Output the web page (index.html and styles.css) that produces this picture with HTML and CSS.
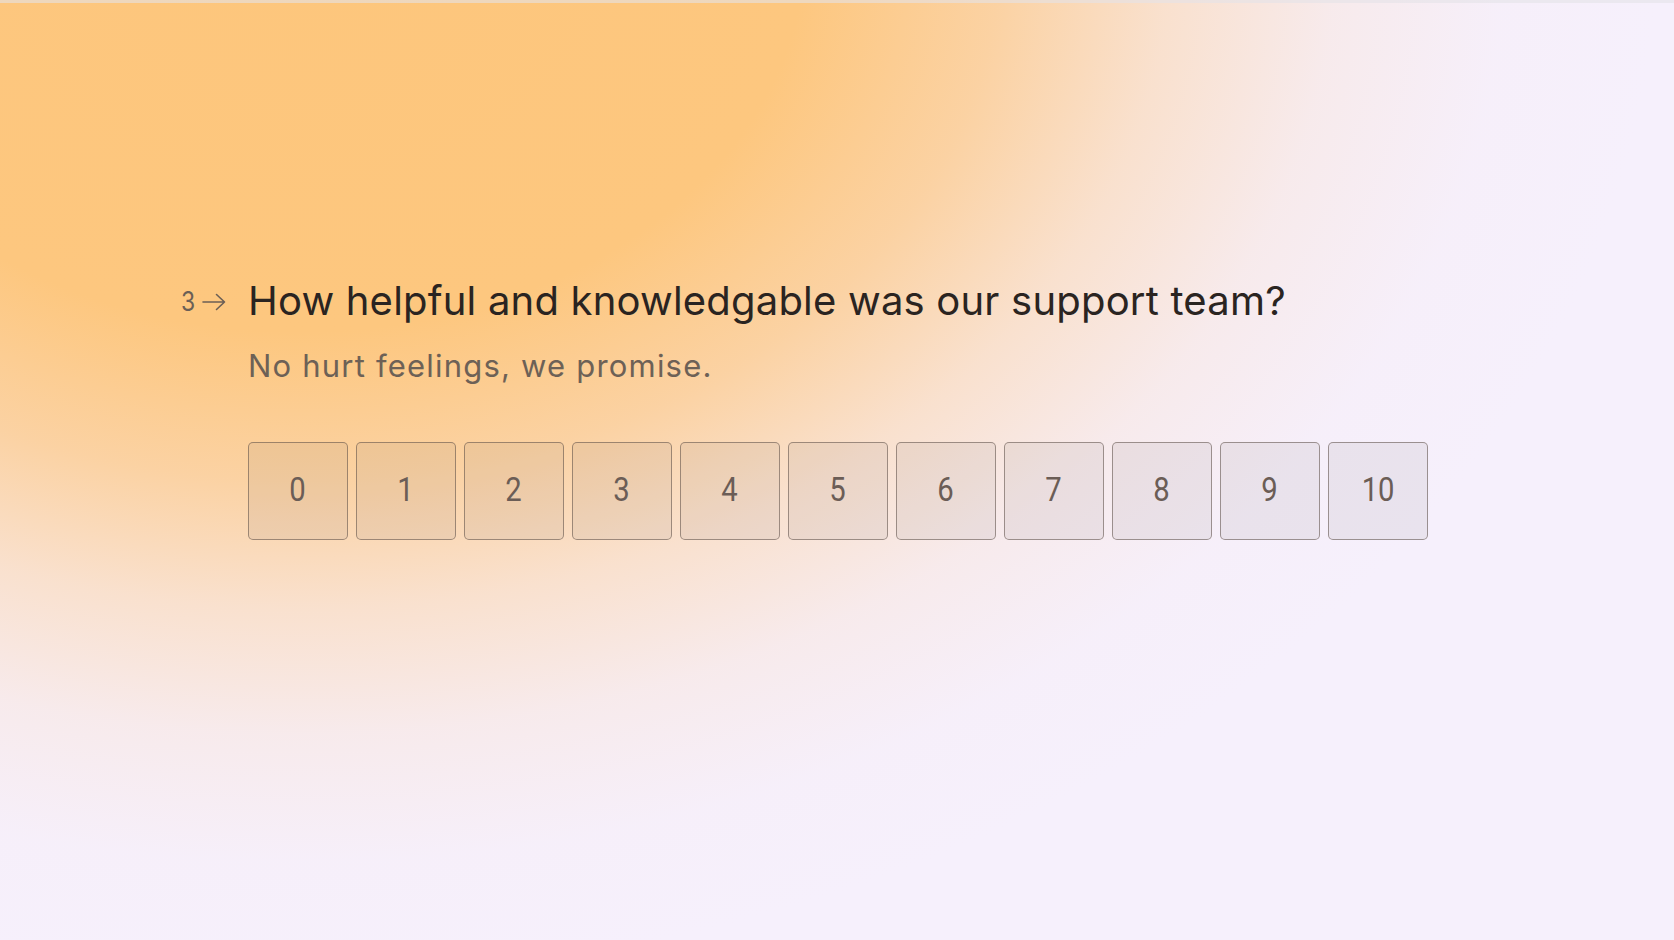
FILE: index.html
```html
<!DOCTYPE html>
<html lang="en">
<head>
<meta charset="utf-8">
<title>Survey question</title>
<link rel="stylesheet" href="styles.css">
</head>
<body>
<div class="page">
  <div class="progress"></div>
  <main class="stage">
    <section class="question">
      <div class="q-head">
        <span class="q-num">
          <span class="q-index">3</span>
          <svg class="q-arrow" width="24" height="18" viewBox="0 0 24 18" aria-hidden="true">
            <path d="M1 9 H22.5 M14.5 1.5 L22.5 9 L14.5 16.5" fill="none" stroke="#6b5f56" stroke-width="1.6" stroke-linecap="round" stroke-linejoin="round"/>
          </svg>
        </span>
        <h1 class="q-title">How helpful and knowledgable was our support team?</h1>
      </div>
      <p class="q-desc">No hurt feelings, we promise.</p>
      <div class="scale">
        <button class="choice"><span class="digit">0</span></button>
        <button class="choice"><span class="digit">1</span></button>
        <button class="choice"><span class="digit">2</span></button>
        <button class="choice"><span class="digit">3</span></button>
        <button class="choice"><span class="digit">4</span></button>
        <button class="choice"><span class="digit">5</span></button>
        <button class="choice"><span class="digit">6</span></button>
        <button class="choice"><span class="digit">7</span></button>
        <button class="choice"><span class="digit">8</span></button>
        <button class="choice"><span class="digit">9</span></button>
        <button class="choice"><span class="digit">10</span></button>
      </div>
    </section>
  </main>
</div>
</body>
</html>
```
FILE: styles.css
```css
html, body {
  margin: 0;
  padding: 0;
}

body {
  width: 1674px;
  height: 940px;
  overflow: hidden;
  font-family: Inter, "Noto Sans", sans-serif;
  background-color: #f6f0fc;
  background-image:
    radial-gradient(ellipse 1400px 1060px at 300px -50px,
      #fdc67c 0%,
      #fdc77f 36%,
      rgba(252, 205, 148, 0.86) 50%,
      rgba(251, 216, 180, 0.64) 62%,
      rgba(249, 226, 212, 0.4) 74%,
      rgba(247, 234, 238, 0.16) 86%,
      rgba(246, 240, 252, 0) 97%);
}

.page {
  display: flex;
  flex-direction: column;
  height: 940px;
}

.progress {
  height: 3px;
  background: rgba(228, 226, 232, 0.6);
  flex: none;
}

.stage {
  padding: 272px 0 0 177px;
}

.question {
  display: flex;
  flex-direction: column;
}

.q-head {
  display: flex;
  align-items: center;
}

.q-num {
  width: 71px;
  flex: none;
  display: flex;
  align-items: center;
  gap: 6px;
  padding-left: 4px;
  box-sizing: border-box;
  color: #6b5f56;
}

.q-index {
  display: inline-block;
  font-size: 27px;
  line-height: 1;
  font-weight: 400;
  transform: scaleX(0.85);
  transform-origin: left center;
  margin-right: -2px;
}

.q-arrow {
  display: block;
  margin-top: 2px;
}

.q-title {
  margin: 0;
  font-size: 40px;
  line-height: 52px;
  font-weight: 400;
  color: #2a2421;
  letter-spacing: 0.2px;
}

.q-desc {
  margin: 19px 0 0 71px;
  font-size: 31px;
  line-height: 39px;
  color: #6d6156;
  font-weight: 400;
  letter-spacing: 1.2px;
}

.scale {
  margin: 57px 0 0 71px;
  display: flex;
  gap: 8px;
}

.choice {
  width: 100px;
  height: 98px;
  box-sizing: border-box;
  border: 1px solid rgba(90, 74, 68, 0.55);
  border-radius: 5px;
  background: rgba(112, 96, 96, 0.09);
  font-family: Roboto, "Noto Sans", sans-serif;
  font-size: 34px;
  color: #6b5d56;
  display: flex;
  align-items: center;
  justify-content: center;
  padding: 0 0 4px 0;
  cursor: pointer;
}

.digit {
  display: inline-block;
  transform: scaleX(0.86);
  line-height: 1;
}
```
